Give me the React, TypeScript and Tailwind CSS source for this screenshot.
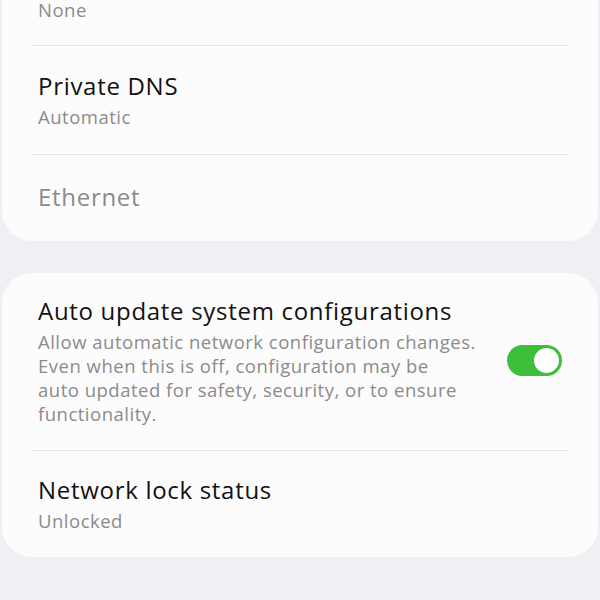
export default function App() {
  return (
    <div className="h-[600px] w-[600px] overflow-hidden bg-[#eef0f4] px-[2px] font-['Open_Sans',sans-serif]">
      {/* Card 1 */}
      <div className="-mt-[40px] rounded-[30px] bg-[#fcfcfc] px-[29px]">
        <div className="h-[85px] flex flex-col justify-end pb-[25px] px-[7px]">
          <p className="text-[18.5px] leading-[20px] tracking-[0.5px] text-[#8b8b8b]">None</p>
        </div>
        <div className="h-px bg-[#e4e4e6]" />
        <div className="flex flex-col justify-center h-[108px] px-[7px]">
          <p className="text-[24px] leading-[30px] tracking-[0.7px] text-[#111]">Private DNS</p>
          <p className="text-[18.5px] leading-[24px] tracking-[0.5px] text-[#8b8b8b] mt-[4px]">Automatic</p>
        </div>
        <div className="h-px bg-[#e4e4e6]" />
        <div className="flex items-center h-[86px] px-[7px] pb-[2px]">
          <p className="text-[24px] leading-[30px] tracking-[0.7px] text-[#8b8b8b]">Ethernet</p>
        </div>
      </div>

      {/* Card 2 */}
      <div className="mt-[32px] rounded-[30px] bg-[#fcfcfc] px-[29px]">
        <div className="flex items-start gap-4 pt-[23px] pb-[24px] px-[7px]">
          <div className="flex-1">
            <p className="text-[24px] leading-[30px] tracking-[0.7px] text-[#111]">Auto update system configurations</p>
            <p className="text-[18.5px] leading-[24px] tracking-[0.5px] text-[#8b8b8b] mt-[4px]">
              Allow automatic network configuration changes.<br />
              Even when this is off, configuration may be<br />
              auto updated for safety, security, or to ensure<br />
              functionality.
            </p>
          </div>
          <div className="relative mt-[49px] h-[31px] w-[55px] shrink-0 rounded-full bg-[#3dbf3b]">
            <div className="absolute right-[3px] top-[3px] h-[25px] w-[25px] rounded-full bg-white" />
          </div>
        </div>
        <div className="h-px bg-[#e4e4e6]" />
        <div className="flex flex-col justify-center h-[106px] px-[7px]">
          <p className="text-[24px] leading-[30px] tracking-[0.7px] text-[#111]">Network lock status</p>
          <p className="text-[18.5px] leading-[24px] tracking-[0.5px] text-[#8b8b8b] mt-[4px]">Unlocked</p>
        </div>
      </div>
    </div>
  )
}
